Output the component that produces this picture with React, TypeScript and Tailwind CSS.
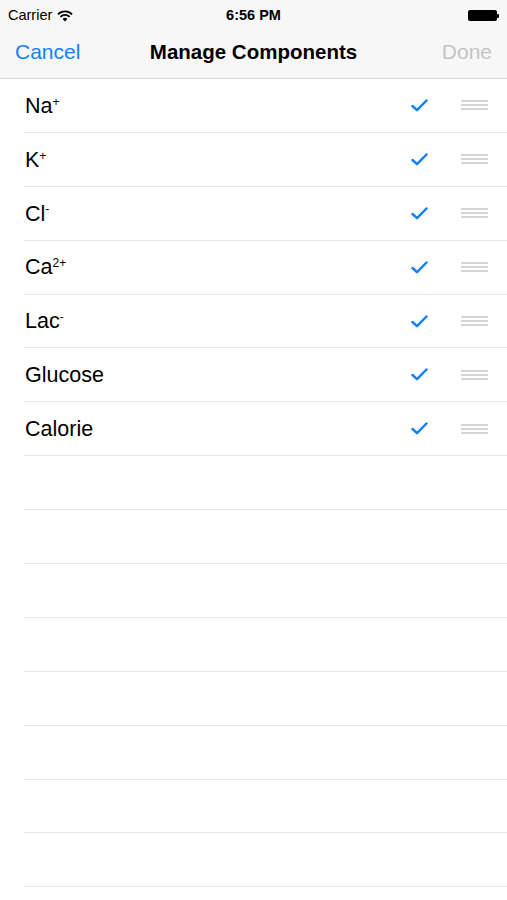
import React from 'react';

type Item = { name: string; sup?: string };

const items: Item[] = [
  { name: 'Na', sup: '+' },
  { name: 'K', sup: '+' },
  { name: 'Cl', sup: '-' },
  { name: 'Ca', sup: '2+' },
  { name: 'Lac', sup: '-' },
  { name: 'Glucose' },
  { name: 'Calorie' },
];

const EMPTY_ROWS = 8;

const Check = () => (
  <svg width="17" height="13" viewBox="0 0 17 13" fill="none">
    <path
      d="M1.5 7 L6 11.2 L15.5 1.5"
      stroke="#157efb"
      strokeWidth="2.5"
      strokeLinecap="round"
      strokeLinejoin="round"
    />
  </svg>
);

const Grip = () => (
  <div className="flex w-[27px] flex-col gap-[2px]">
    <div className="h-[2px] bg-[#d6d6d9]" />
    <div className="h-[2px] bg-[#d6d6d9]" />
    <div className="h-[2px] bg-[#d6d6d9]" />
  </div>
);

const StatusBar = () => (
  <div className="relative flex h-[28px] items-center px-[8px] pt-[3px] text-[14.5px] text-black">
    <div className="flex items-center gap-[5px]">
      <span>Carrier</span>
      <svg width="16" height="12" viewBox="0 0 16 12">
        <path d="M8 11.5 L5.6 9 A3.4 3.4 0 0 1 10.4 9 Z" fill="#000" />
        <path d="M3.4 6.8 A6.5 6.5 0 0 1 12.6 6.8" stroke="#000" strokeWidth="1.8" fill="none" />
        <path d="M1 4.3 A10 10 0 0 1 15 4.3" stroke="#000" strokeWidth="1.8" fill="none" />
      </svg>
    </div>
    <span className="absolute left-1/2 -translate-x-1/2 font-bold">6:56 PM</span>
    <div className="ml-auto flex items-center">
      <div className="h-[11px] w-[29px] rounded-[2px] bg-black" />
      <div className="h-[4px] w-[2px] rounded-r-[1px] bg-black" />
    </div>
  </div>
);

export default function App() {
  return (
    <div
      className="flex h-[900px] w-[507px] flex-col overflow-hidden bg-white"
      style={{ fontFamily: '"Liberation Sans", Arial, sans-serif' }}
    >
      <div className="border-b border-[#d9d9d9] bg-[#f7f7f7]">
        <StatusBar />
        <div className="grid h-[50px] grid-cols-[1fr_auto_1fr] items-center px-[15px] pb-[2px] text-[21px]">
          <span className="text-[#157efb]">Cancel</span>
          <span className="text-[20.5px] font-bold text-black">Manage Components</span>
          <span className="text-right text-[#c4c4c4]">Done</span>
        </div>
      </div>
      <ul className="flex flex-col">
        {items.map((item) => (
          <li key={item.name} className="pl-[24px]">
            <div className="flex h-[53.9px] items-center border-b border-[#e6e6e6] pr-[19px]">
              <span className="pl-[1px] pt-[1px] text-[21.5px] text-black">
                {item.name}
                {item.sup && (
                  <sup className="top-[-0.6em] text-[12px]">{item.sup}</sup>
                )}
              </span>
              <div className="ml-auto mr-[33px]">
                <Check />
              </div>
              <Grip />
            </div>
          </li>
        ))}
        {Array.from({ length: EMPTY_ROWS }).map((_, i) => (
          <li key={i} className="pl-[24px]">
            <div className="h-[53.9px] border-b border-[#e6e6e6]" />
          </li>
        ))}
      </ul>
    </div>
  );
}
